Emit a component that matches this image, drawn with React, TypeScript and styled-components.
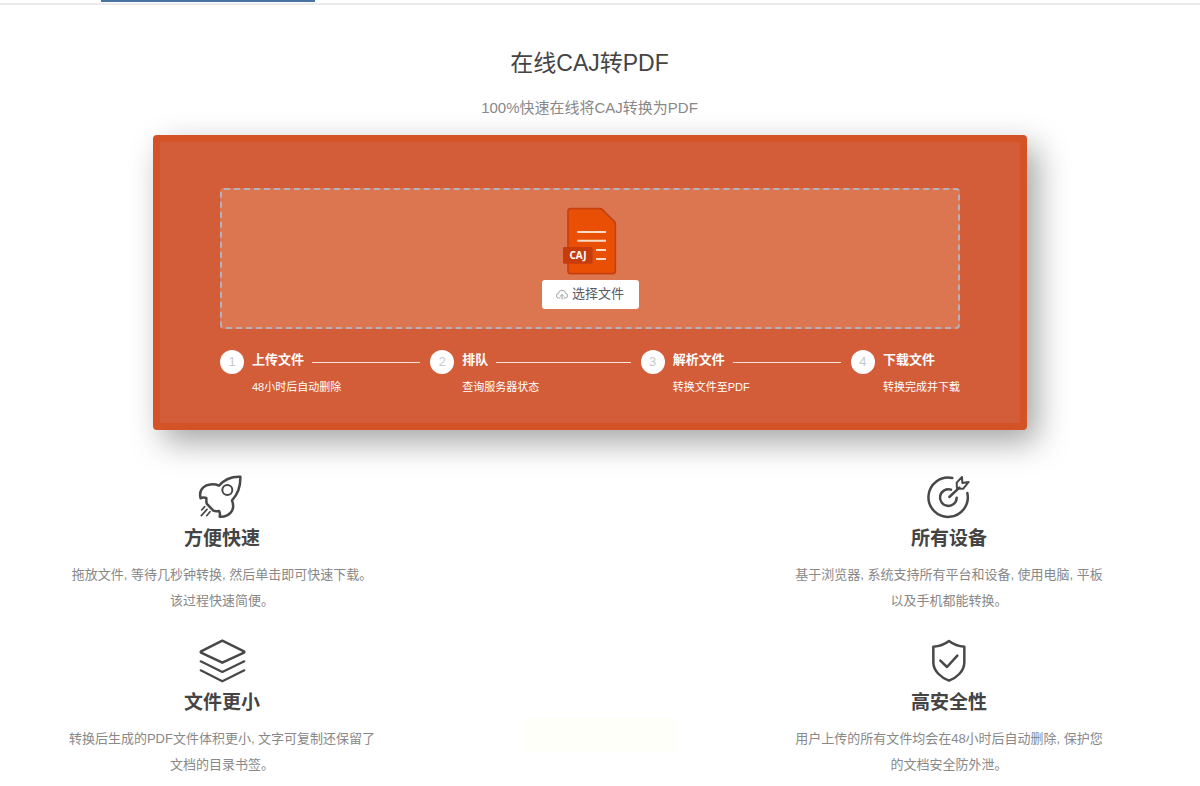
import React from "react";
import styled, { createGlobalStyle } from "styled-components";

const GlobalStyle = createGlobalStyle`
  * { box-sizing: border-box; }
  body {
    margin: 0;
    background: #fff;
    color: #444;
    font-family: "Liberation Sans", "Noto Sans CJK SC", sans-serif;
  }
`;

const Header = styled.header`
  height: 5px;
  padding-left: 101px;
  border-bottom: 2px solid #ebebeb;
`;

const ActiveTab = styled.div`
  width: 214px;
  height: 2px;
  background: #4773a5;
`;

const Main = styled.main`
  padding: 40px 21px 0 0;
`;

const Title = styled.h1`
  margin: 0;
  font-size: 23px;
  font-weight: 400;
  line-height: 36px;
  text-align: center;
  color: #444;
`;

const Subtitle = styled.p`
  margin: 14px 0;
  font-size: 15px;
  line-height: 26px;
  text-align: center;
  color: #888;
`;

const Card = styled.section`
  margin: 0 152px 0 153px;
  padding: 46px 60px 27px;
  border: 7px solid #d35226;
  border-radius: 4px;
  background: #d35c39;
  box-shadow: 10px 12px 32px rgba(0, 0, 0, 0.36);
`;

const DropZone = styled.div`
  display: flex;
  flex-direction: column;
  align-items: center;
  height: 141px;
  padding-top: 16px;
  border: 2px dashed #b9afbb;
  border-radius: 4px;
  background: #dc7650;
`;

const PickButton = styled.button`
  display: flex;
  align-items: center;
  justify-content: center;
  gap: 4px;
  width: 97px;
  height: 29px;
  margin-top: 2px;
  padding: 0 0 2px;
  border: 0;
  border-radius: 3px;
  background: #fff;
  color: #555a66;
  font-family: inherit;
  font-size: 13px;
  line-height: 20px;
`;

const CloudArt = styled.svg`
  width: 12px;
  height: 12px;
  margin-top: 2px;
  fill: none;
  stroke: #a4a4a4;
  stroke-linecap: round;
  stroke-linejoin: round;
`;

const Steps = styled.ol`
  display: flex;
  margin: 21px 0 0;
  padding: 0;
  list-style: none;
  color: #fff;
`;

const Step = styled.li<{ $last: boolean }>`
  display: flex;
  gap: 8px;
  flex: ${(p) => (p.$last ? "none" : "1 1 0")};
  min-width: 0;
`;

const StepNumber = styled.span`
  flex: none;
  width: 24px;
  height: 24px;
  border-radius: 50%;
  background: #fff;
  color: #c8c8c8;
  font-size: 13px;
  line-height: 24px;
  text-align: center;
`;

const StepBody = styled.div`
  flex: 1;
  min-width: 0;
`;

const StepTitle = styled.div<{ $last: boolean }>`
  display: flex;
  align-items: center;
  gap: 8px;
  height: 24px;
  padding-right: 10px;
  font-size: 13px;
  font-weight: 700;
  line-height: 20px;
  white-space: nowrap;
  span { padding-bottom: 4px; }
  &::after {
    content: "";
    display: ${(p) => (p.$last ? "none" : "block")};
    flex: 1;
    height: 1px;
    background: #fbe3da;
  }
`;

const StepNote = styled.div`
  margin-top: 4px;
  font-size: 11px;
  line-height: 18px;
  white-space: nowrap;
`;

const Features = styled.section`
  display: grid;
  grid-template-columns: 310px 310px;
  justify-content: space-between;
  row-gap: 23px;
  padding: 43px 75px 10px 67px;
`;

const Feature = styled.article`
  display: flex;
  flex-direction: column;
  align-items: center;
  text-align: center;
`;

const FeatureTitle = styled.h2`
  margin: 0 0 5px;
  font-size: 19px;
  font-weight: 700;
  line-height: 36px;
  color: #444;
`;

const FeatureText = styled.p`
  margin: 0;
  font-size: 13px;
  line-height: 26px;
  color: #888;
`;

const Toast = styled.div`
  position: fixed;
  left: 50%;
  bottom: 34px;
  width: 152px;
  height: 34px;
  margin-left: -75px;
  background: #fffffa;
`;

const LineIcon = styled.svg`
  display: block;
  width: 48px;
  height: 48px;
  fill: none;
  stroke: #484848;
  stroke-width: 7.5;
  stroke-linecap: round;
  stroke-linejoin: round;
`;

const FileArt = styled.svg`
  display: block;
  width: 56px;
  height: 72px;
`;

const CloudIcon = () => (
  <CloudArt viewBox="0 0 24 24" strokeWidth="2" aria-hidden="true">
    <path d="M8 18H5.500A4.500 4.500 0 0 1 5 9A7 6.500 0 0 1 19 9A4.500 4.500 0 0 1 18.500 18H16M12 20V11M8.500 14.500L12 11L15.500 14.500" />
  </CloudArt>
);

const RocketIcon = () => (
  <LineIcon viewBox="84 24 144 144" aria-hidden="true">
    <path d="M211 35C186 34 163 43 147 62C130 55 110 58 100 67C91 75 88 86 92 100C98 96 104 97 109 99C109 106 109 112 110 116L130 137C135 139 141 139 147 138C150 143 151 149 149 155C161 156 175 151 182 143C190 134 191 119 186 106C203 88 212 63 211 35Z" />
    <circle cx="172" cy="75" r="15" strokeWidth="6" />
    <path d="M95 135L104 125M94 152L111 133M110 152L120 140" strokeWidth="5" />
  </LineIcon>
);

const TargetIcon = () => (
  <LineIcon viewBox="75 24 144 144" aria-hidden="true">
    <path d="M157 39A59 59 0 1 0 202 84" />
    <path d="M153 74A25 25 0 1 0 170 98M148 96L178 68" />
    <path d="M171 71L170 53L186 36L187 54L206 51L190 71Z" strokeWidth="6" />
  </LineIcon>
);

const LayersIcon = () => (
  <LineIcon viewBox="84 21 144 144" aria-hidden="true">
    <path d="M157 32L222 64Q224 66 222 68L157 98L93 68Q91 66 93 64Z" />
    <path d="M92 94L157 126L223 94M92 121L157 154L223 121" strokeWidth="6.500" />
  </LineIcon>
);

const ShieldIcon = () => (
  <LineIcon viewBox="75 21 144 144" aria-hidden="true">
    <path d="M147 33C134 43 117 49 100 50V97C100 124 124 143 147 152C170 143 193 124 193 97V50C177 49 160 43 147 33Z" />
    <path d="M121 92L141 111L172 77" />
  </LineIcon>
);

const CajFile = () => (
  <FileArt viewBox="126 33 168 216" role="img" aria-label="CAJ">
    <path
      d="M152 41H240Q244 41 247 44L283 80Q286 83 286 87V228Q286 236 278 236H152Q144 236 144 228V49Q144 41 152 41Z"
      fill="#e95006"
      stroke="#c5400e"
      strokeWidth="5"
    />
    <path
      d="M172 111H258M172 137H258M228 165H258M228 192H258"
      stroke="#fbdcc8"
      strokeWidth="6"
    />
    <rect x="129" y="156" width="89" height="50" rx="4" fill="#c63c0b" />
    <text
      x="174"
      y="192"
      textAnchor="middle"
      fill="#fff"
      fontFamily="Noto Sans, sans-serif"
      fontSize="30"
      fontWeight="700"
    >
      CAJ
    </text>
  </FileArt>
);

const steps = [
  { title: "上传文件", note: "48小时后自动删除" },
  { title: "排队", note: "查询服务器状态" },
  { title: "解析文件", note: "转换文件至PDF" },
  { title: "下载文件", note: "转换完成并下载" },
];

const features = [
  { Icon: RocketIcon, title: "方便快速", text: "拖放文件, 等待几秒钟转换, 然后单击即可快速下载。该过程快速简便。" },
  { Icon: TargetIcon, title: "所有设备", text: "基于浏览器, 系统支持所有平台和设备, 使用电脑, 平板以及手机都能转换。" },
  { Icon: LayersIcon, title: "文件更小", text: "转换后生成的PDF文件体积更小, 文字可复制还保留了文档的目录书签。" },
  { Icon: ShieldIcon, title: "高安全性", text: "用户上传的所有文件均会在48小时后自动删除, 保护您的文档安全防外泄。" },
];

export default function App() {
  return (
    <>
      <GlobalStyle />
      <Header>
        <ActiveTab />
      </Header>
      <Main lang="zh-CN">
        <Title>在线CAJ转PDF</Title>
        <Subtitle>100%快速在线将CAJ转换为PDF</Subtitle>
        <Card>
          <DropZone>
            <CajFile />
            <PickButton type="button">
              <CloudIcon />
              选择文件
            </PickButton>
          </DropZone>
          <Steps>
            {steps.map((step, i) => {
              const last = i === steps.length - 1;
              return (
                <Step key={step.title} $last={last}>
                  <StepNumber>{i + 1}</StepNumber>
                  <StepBody>
                    <StepTitle $last={last}>
                      <span>{step.title}</span>
                    </StepTitle>
                    <StepNote>{step.note}</StepNote>
                  </StepBody>
                </Step>
              );
            })}
          </Steps>
        </Card>
        <Features>
          {features.map(({ Icon, title, text }) => (
            <Feature key={title}>
              <Icon />
              <FeatureTitle>{title}</FeatureTitle>
              <FeatureText>{text}</FeatureText>
            </Feature>
          ))}
        </Features>
      </Main>
      <Toast />
    </>
  );
}
